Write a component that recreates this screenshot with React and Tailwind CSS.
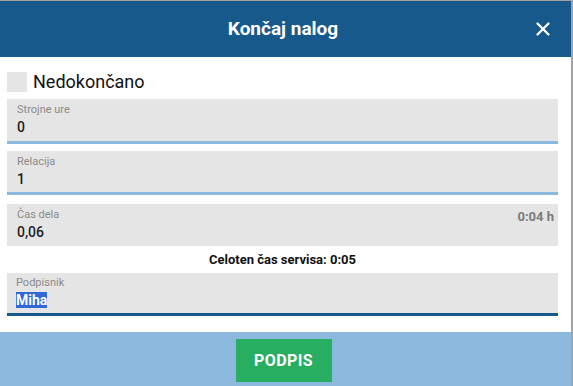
import React from 'react';
import { X } from 'lucide-react';

const Field = ({ label, value, className, right }) => {
  return (
    <div className={`bg-[#e5e5e5] px-[10px] pt-[4px] relative box-content ${className}`}>
      <div className="text-[11px] leading-[14px] text-[#8a8a8a]">{label}</div>
      <div className="text-[14px] leading-[20px] text-[#1e1e1e] font-medium">{value}</div>
      {right && (
        <div className="absolute right-[4px] top-[3px] text-[13px] font-bold text-[#7a7a7a]">{right}</div>
      )}
    </div>
  );
};

const App = () => {
  return (
    <div
      className="w-[573px] h-[386px] flex flex-col bg-white border-t border-r-2 border-[#a3a3a3] overflow-hidden"
      style={{ fontFamily: 'Roboto, "Liberation Sans", sans-serif' }}
    >
      {/* Header */}
      <div className="h-[56px] shrink-0 bg-[#17598b] flex items-center justify-center relative pr-[5px]">
        <span className="text-white text-[19px] font-bold">Končaj nalog</span>
        <X className="absolute right-[17px] top-[17px] text-white" size={22} strokeWidth={2.5} />
      </div>

      {/* Body */}
      <div className="flex-1 pl-[7px] pr-[13px] pt-[15px]">
        <div className="flex items-center gap-[6px] mb-[7px] h-[20px]">
          <div className="w-[20px] h-[20px] bg-[#e5e5e5]" />
          <span className="text-[18px] leading-[20px] text-[#111]">Nedokončano</span>
        </div>

        <Field label="Strojne ure" value="0" className="h-[38px] border-b-[3px] border-[#8cb8e0] mb-[7px]" />
        <Field label="Relacija" value="1" className="h-[37px] border-b-[3px] border-[#8cb8e0] mb-[9px]" />
        <Field label="Čas dela" value="0,06" right="0:04 h" className="h-[38px]" />

        <div className="h-[27px] flex items-center justify-center text-[13px] font-bold text-[#111]">
          Celoten čas servisa: 0:05
        </div>

        <div className="bg-[#e5e5e5] h-[37px] px-[9px] pt-[3px] border-b-[3px] border-[#17598b] box-content">
          <div className="text-[11px] leading-[14px] text-[#8a8a8a]">Podpisnik</div>
          <div className="text-[14px] leading-[18px] mt-[1px] font-bold">
            <span className="bg-[#3267d6] text-white">Miha</span>
          </div>
        </div>
      </div>

      {/* Footer */}
      <div className="h-[54px] shrink-0 bg-[#8cb8de] flex justify-center pt-[7px] pr-[4px]">
        <button className="w-[96px] h-[43px] bg-[#27ae60] text-white font-bold text-[16px] tracking-wide">
          PODPIS
        </button>
      </div>
    </div>
  );
};

export default App;
